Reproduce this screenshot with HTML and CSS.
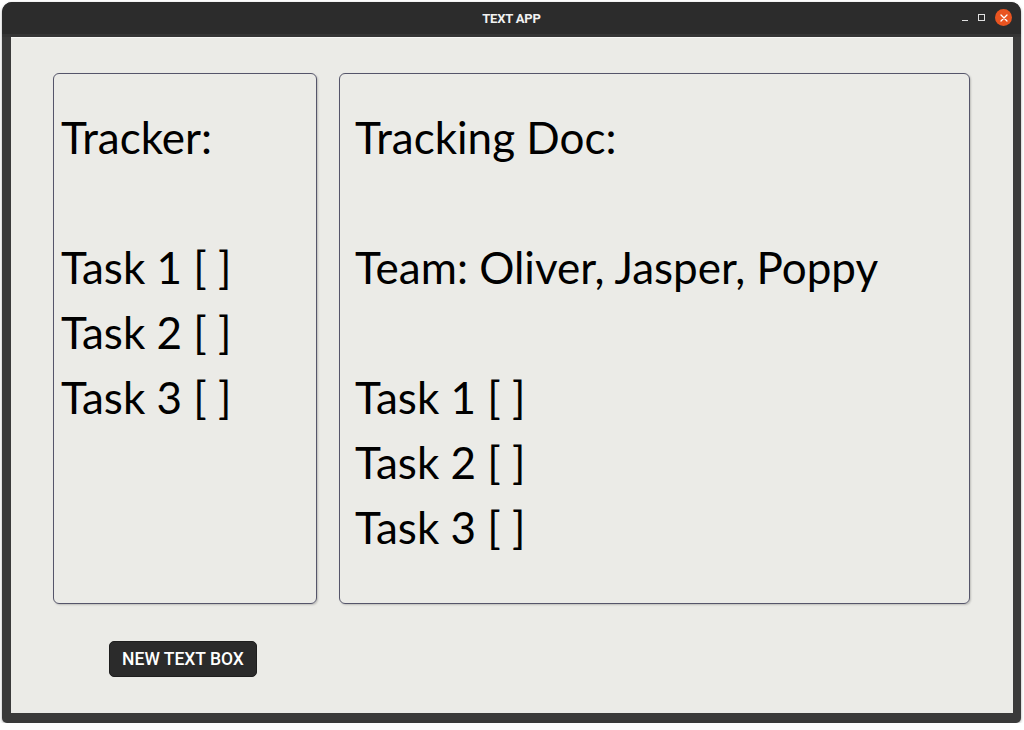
FILE: index.html
```html
<!DOCTYPE html>
<html lang="en">
<head>
    <meta charset="UTF-8">
    <meta name="viewport" content="width=device-width, initial-scale=1.0">
    <title>TEXT APP</title>
    <link rel="stylesheet" href="styles.css">
</head>
<body>
    <div class="window">
        <div class="titlebar">
            <span class="title">TEXT APP</span>
            <div class="controls">
                <span class="ctl-min"></span>
                <span class="ctl-max"></span>
                <span class="ctl-close">
                    <svg width="8" height="8" viewBox="0 0 8 8">
                        <path d="M1 1 L7 7 M7 1 L1 7" stroke="#fff" stroke-width="1.3" stroke-linecap="round"/>
                    </svg>
                </span>
            </div>
        </div>

        <div class="content">
            <div class="boxes">
                <div class="text-box text-box-small">Tracker:<br><br>Task 1 [ ]<br>Task 2 [ ]<br>Task 3 [ ]</div>
                <div class="text-box text-box-wide">Tracking Doc:<br><br>Team: Oliver, Jasper, Poppy<br><br>Task 1 [ ]<br>Task 2 [ ]<br>Task 3 [ ]</div>
            </div>
            <button class="btn">NEW TEXT BOX</button>
        </div>
    </div>
</body>
</html>
```

FILE: styles.css
```css
body {
    margin: 0;
    background: #ffffff;
    font-family: Lato, "Open Sans", sans-serif;
}
.window {
    box-sizing: border-box;
    margin: 2px 3px 0 2px;
    height: 721px;
    background: #3a3a3a;
    border-radius: 10px 10px 5px 5px;
    padding: 0 8px 10px 9px;
    display: flex;
    flex-direction: column;
    box-shadow: 0 1px 3px rgba(0,0,0,0.35);
}
.titlebar {
    height: 32px;
    margin: 0 -8px 0 -9px;
    background: #2c2c2c;
    border-radius: 10px 10px 0 0;
    border-bottom: 3px solid #353535;
    display: flex;
    align-items: center;
    justify-content: center;
    position: relative;
}
.title {
    color: #f2f2f2;
    font-family: Roboto, sans-serif;
    font-weight: bold;
    font-size: 13px;
    letter-spacing: -0.2px;
}
.controls {
    position: absolute;
    right: 9px;
    top: 7px;
    display: flex;
    align-items: center;
    gap: 10px;
}
.ctl-min {
    width: 6px;
    height: 1px;
    margin-top: 6px;
    background: #e0e0e0;
}
.ctl-max {
    width: 5px;
    height: 5px;
    border: 1px solid #e0e0e0;
}
.ctl-close {
    width: 17px;
    height: 17px;
    border-radius: 50%;
    background: #e95420;
    display: flex;
    align-items: center;
    justify-content: center;
}
.content {
    flex: 1;
    background: #ebebe7;
    border-top: 1px solid #f7f7f5;
    padding: 35px 43px 0 42px;
}
.boxes {
    display: flex;
    gap: 22px;
}
.text-box {
    height: 531px;
    box-sizing: border-box;
    border: 1px solid #55556a;
    border-radius: 6px;
    box-shadow: 1px 1px 2px rgba(0,0,0,0.2);
    font-size: 44px;
    line-height: 65px;
    color: #000;
    padding-top: 31px;
}
.text-box-small {
    width: 264px;
    padding-left: 7px;
}
.text-box-wide {
    flex: 1;
    padding-left: 15px;
}
.btn {
    margin: 37px 0 0 56px;
    width: 148px;
    height: 36px;
    background: #2b2b2b;
    color: #fff;
    border: 1px solid #1e1e1e;
    border-radius: 5px;
    font-family: Roboto, sans-serif;
    font-weight: 500;
    font-size: 17.5px;
    padding: 0;
}
```
